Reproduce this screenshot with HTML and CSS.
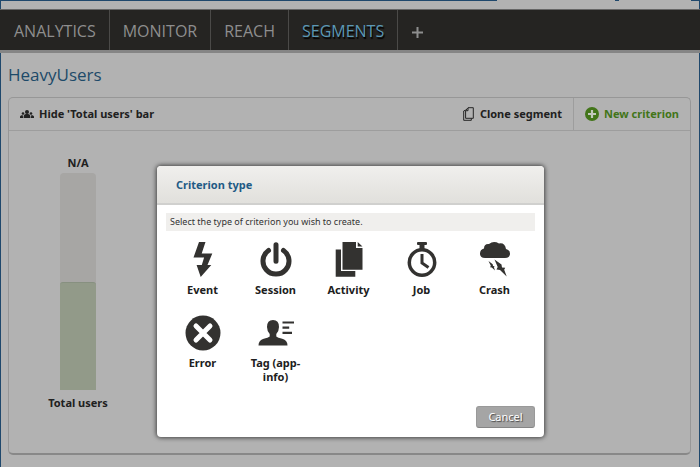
FILE: index.html
```html
<!DOCTYPE html>
<html lang="en">
<head>
<meta charset="utf-8">
<title>HeavyUsers</title>
<link rel="stylesheet" href="styles.css">
</head>
<body>
<div class="page">
  <div class="topline"><span class="topline-main"></span><span class="topline-tick"></span><span class="topline-end"></span></div>
  <nav class="nav">
    <a href="#">ANALYTICS</a>
    <a href="#">MONITOR</a>
    <a href="#">REACH</a>
    <a href="#" class="active">SEGMENTS</a>
    <a href="#" class="add" aria-label="Add"><svg width="11" height="11" viewBox="0 0 11 11"><path d="M5.5 0v11M0 5.5h11" stroke="#8e8e8e" stroke-width="2"/></svg></a>
  </nav>
  <main class="main">
    <h1>HeavyUsers</h1>
    <section class="panel">
      <header class="toolbar">
        <button type="button" class="tool hide">
          <svg width="14" height="8" viewBox="0 0 14 8" fill="#222"><circle cx="7" cy="2" r="2"/><path d="M3.700 8V6q0-1.300 2-2h2.600q2 .7 2 2v2z"/><circle cx="3" cy="3.500" r="1.300"/><circle cx="11" cy="3.500" r="1.300"/><path d="M0 8V6.500q.4-1.200 2.600-1.500L3.200 8zM14 8V6.500q-.4-1.200-2.600-1.500L10.800 8z"/></svg>
          Hide 'Total users' bar
        </button>
        <button type="button" class="tool clone">
          <svg width="11" height="14" viewBox="0 0 11 14" fill="none" stroke="#252525"><path d="M5 .7h5.300v10.600H2.600V3.500z"/><path d="M5 1v2.700H2.700M2.600 3L.7 4v9.300h7.600v-2"/></svg>
          Clone segment
        </button>
        <button type="button" class="tool new">
          <svg width="14" height="14" viewBox="0 0 14 14"><circle cx="7" cy="7" r="7" fill="#427519"/><path d="M7 3v8M3 7h8" stroke="#c2c8bd" stroke-width="2.200"/></svg>
          New criterion
        </button>
      </header>
      <div class="chart">
        <div class="bar-group">
          <span>N/A</span>
          <div class="bar"><div class="bar-fill"></div></div>
          <span>Total users</span>
        </div>
      </div>
    </section>
  </main>
</div>

<div class="overlay">
  <div class="modal" role="dialog" aria-labelledby="modal-title">
    <h2 id="modal-title">Criterion type</h2>
    <div class="modal-body">
      <p>Select the type of criterion you wish to create.</p>
      <div class="types">
        <button type="button"><svg viewBox="0 0 36 36"><path d="M14 0h6.500l-3.800 11.500h10.600L22.500 23h3.800l-10.600 12L11.600 23h5.200l2.300-7.500H8.500z"/></svg>Event</button>
        <button type="button"><svg viewBox="0 0 36 36"><path d="M10.500 8.500a13 13 0 1 0 15 0M18 2.700v16.600" fill="none" stroke="#333230" stroke-width="5" stroke-linecap="round"/></svg>Session</button>
        <button type="button"><svg viewBox="0 0 36 36"><path d="M11.500 0H25v6h6.500v21.700h-20zM26.700 0l4.800 4.500h-4.800zM4.700 7.500H10v21.600h14.300v5.600H4.700z"/></svg>Activity</button>
        <button type="button"><svg viewBox="0 0 36 36"><g fill="none" stroke="#333230"><circle cx="18" cy="20.500" r="12.700" stroke-width="3.500"/><path d="M18 12v9l6.500 4.500" stroke-width="3"/></g><path d="M13 1q0-1 1-1h8q1 0 1 1v1q0 1-1 1h-1.500v4h-5V3H14q-1 0-1-1z"/></svg>Job</button>
        <button type="button"><svg viewBox="0 0 36 36"><path d="M8 16q-5 0-5-4.500Q3 7.500 7 6.500q0-5 5-4.500Q16.500-1.500 22 1.500q6-1 7 5.500 4 1 4 4.500 0 4.500-5 4.500zM11.500 19l4.200 3.200.3 1.800 1.500.3-.5 1.200 1 3-3.200-3-1.700-.3.700-1.500zM17.500 17.500l7 5 .5 3 3.200.2-1 2 2.500 6.800-6.700-6.500-3.500-.5 1.200-2.500z"/></svg>Crash</button>
        <button type="button"><svg viewBox="0 0 36 36"><circle cx="18" cy="18" r="17.500"/><path d="M11 11l14 14M25 11L11 25" stroke="#fff" stroke-width="5" stroke-linecap="round"/></svg>Error</button>
        <button type="button"><svg viewBox="0 0 36 36"><path d="M15 5q6 0 6 7 0 4-2.700 7v2.500q1 1 6.700 2.500 4.500 1.500 4.500 6.500H.5Q.5 25.500 5 24q5.500-1.500 6.700-2.500V19Q9 16 9 12q0-7 6-7z"/><path d="M24.500 7.500H36M24.500 12.700h6.700M24.500 17.800H34" stroke="#333230" stroke-width="2.200"/></svg>Tag (app-info)</button>
      </div>
      <div class="actions"><button type="button" class="cancel">Cancel</button></div>
    </div>
  </div>
</div>
</body>
</html>
```
FILE: styles.css
```css
* { box-sizing: border-box; }
body { margin: 0; background: #b2b2b2; color: #202020; font: 600 11px/14px "Noto Sans", "Open Sans", sans-serif; }
button { border: 0; padding: 0; background: none; color: inherit; font: inherit; }

.page { min-height: 100vh; border: solid #1f486c; border-width: 0 1px; }
.topline { display: flex; height: 9px; }
.topline span { height: 1px; background: #1f486c; }
.topline-main { flex: 0 0 71%; }
.topline-tick { flex: 0 0 4px; margin-left: 17%; }
.topline-end { flex: 0 0 8px; margin-left: auto; }
.nav { display: flex; height: 44px; padding-left: 1px; border-top: 1px solid #666; border-bottom: 3px solid #858585; margin: 0 -1px; background: #252422; font: 400 16px/40px "Open Sans", sans-serif; }
.nav a { padding: 1px 13px 0; border-right: 1px solid #4b4a48; color: #8e8e8e; text-decoration: none; }
.nav .active { color: #5c98b5; text-shadow: 1px 2px 1px #000; }
.nav .add { display: flex; align-items: center; padding: 5px 14px 0; border: 0; }

.main { padding: 10px 8px 12px 7px; }
h1 { margin: 0 0 11px; color: #1d4a69; font: 400 17px/23px "Open Sans", sans-serif; }
.panel { min-height: 358px; border: 1px solid #979797; border-bottom: 2px solid #888; border-radius: 5px; }
.toolbar { display: flex; height: 33px; border-bottom: 1px solid #9d9d9d; }
.tool { display: flex; align-items: center; font-weight: 700; }
.hide { gap: 5px; margin: 0 auto 0 11px; }
.clone { gap: 6px; padding-right: 11px; }
.new { gap: 5px; padding: 0 11px; border-left: 1px solid #9d9d9d; color: #427519; }
.chart { padding: 25px 31px; }
.bar-group { display: flex; flex-direction: column; align-items: center; gap: 3px; width: 76px; font-weight: 700; }
.bar { display: flex; align-items: flex-end; width: 36px; height: 217px; border-radius: 4px 4px 0 0; background: #a7a6a4; }
.bar-fill { width: 100%; height: 50%; border-top: 1px solid #879080; border-radius: 3px 3px 0 0; background: #929a89; }
.bar + span { margin-top: 3px; }

.overlay { position: absolute; inset: 0; display: flex; justify-content: center; align-items: flex-start; padding: 166px 15px 16px 16px; }
.modal { width: 387px; border-radius: 4px; background: #fff; box-shadow: 0 0 4px 1px #444; overflow: hidden; }
h2 { margin: 0; padding: 1px 19px 0; border-bottom: 2px solid #d0d0ce; background: linear-gradient(#f0efed, #e1e0dc); color: #225a85; font-size: 11px; font-weight: 700; line-height: 36px; }
.modal-body { padding: 8px 9px 9px; }
p { margin: 0 0 11px; padding: 0 4px; background: #f0efed; color: #333; font-size: 9px; font-weight: 400; line-height: 18px; }
.types { display: grid; grid-template-columns: repeat(5, 73px); grid-auto-rows: 73px; }
.types button { display: flex; flex-direction: column; align-items: center; gap: 5px; padding: 0 8px; font-weight: 700; }
.types svg { flex: none; width: 36px; height: 36px; fill: #333230; }
.actions { display: flex; justify-content: flex-end; padding-top: 18px; }
.cancel { width: 59px; height: 22px; border: 1px solid #999; border-bottom-color: #858585; border-radius: 3px; background: #a5a5a5; color: #fff; text-shadow: 1px 1px 1px #444; font-weight: 400; }
```
